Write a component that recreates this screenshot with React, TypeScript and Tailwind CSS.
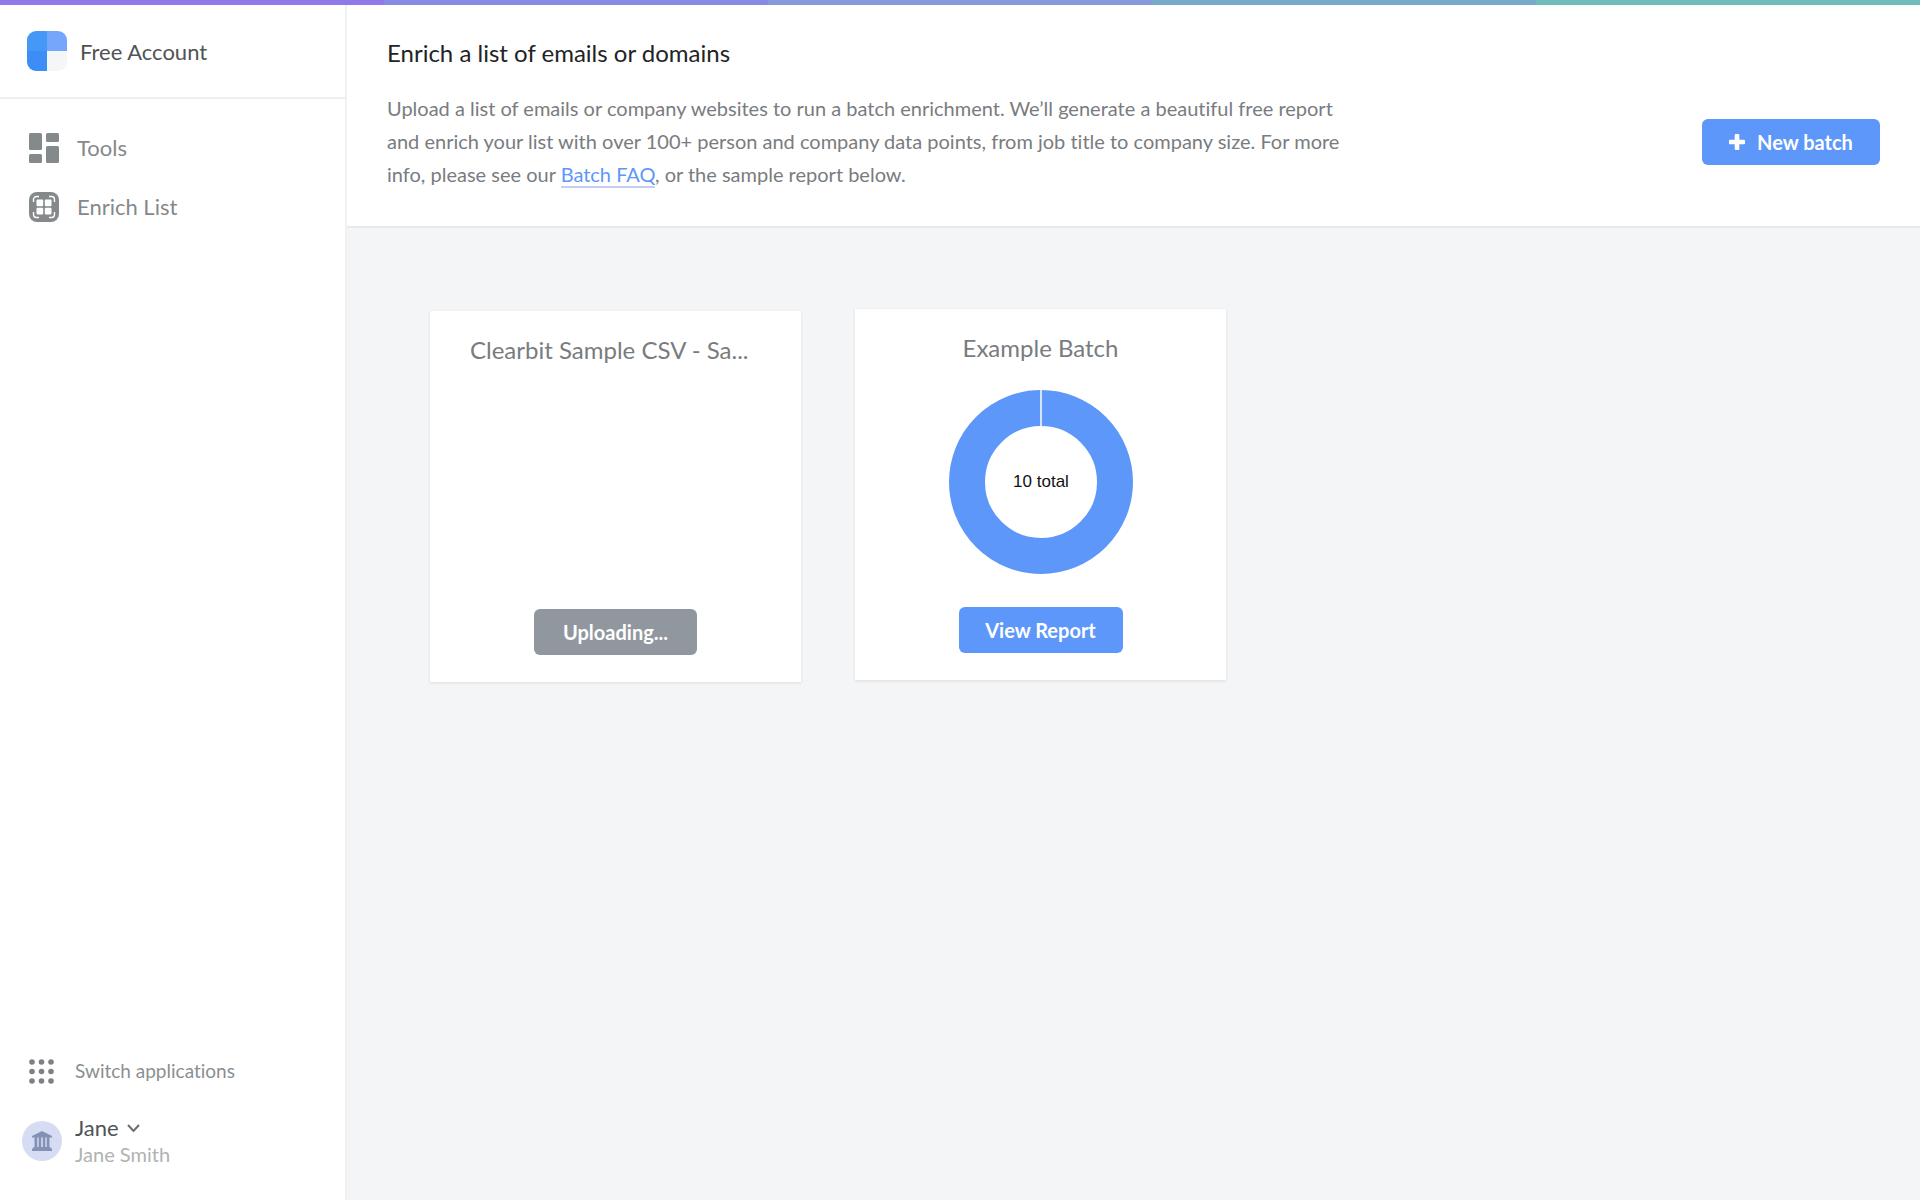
import React from "react";

const bands = ["bg-[#9079ea]", "bg-[#8789e6]", "bg-[#8799d8]", "bg-[#79a9cb]", "bg-[#6fbcbb]"];

function LogoMark() {
  return (
    <svg viewBox="0 0 40 40" className="size-10 shrink-0" aria-hidden="true">
      <defs>
        <clipPath id="logo-shape">
          <rect width="40" height="40" rx="9" />
        </clipPath>
      </defs>
      <g clipPath="url(#logo-shape)">
        <rect width="20" height="20" fill="#4499f7" />
        <rect y="20" width="20" height="20" fill="#3d8df6" />
        <rect x="20" width="20" height="20" fill="#74a6fb" />
        <rect x="20" y="20" width="20" height="20" fill="#f5f7f7" />
      </g>
    </svg>
  );
}

function ToolsIcon() {
  return (
    <svg viewBox="0 0 30 30" className="size-[30px] shrink-0" fill="#84898c" aria-hidden="true">
      <rect width="13" height="17" rx="1.5" />
      <rect x="17" width="13" height="9" rx="1.5" />
      <rect y="21" width="13" height="9" rx="1.5" />
      <rect x="17" y="13" width="13" height="17" rx="1.5" />
    </svg>
  );
}

function EnrichIcon() {
  return (
    <svg viewBox="0 0 30 30" className="size-[30px] shrink-0" aria-hidden="true">
      <rect width="30" height="30" rx="8" fill="#84898c" />
      <g fill="#fff">
        <rect x="7.5" y="7.5" width="6.700" height="6.700" rx="1" />
        <rect x="15.800" y="7.5" width="6.700" height="6.700" rx="1" />
        <rect x="7.5" y="15.800" width="6.700" height="6.700" rx="1" />
        <rect x="15.800" y="15.800" width="6.700" height="6.700" rx="1" />
      </g>
      <path
        d="M4.500 10V7.500a3 3 0 0 1 3-3H10M20 4.500h2.500a3 3 0 0 1 3 3V10M25.500 20v2.500a3 3 0 0 1-3 3H20M10 25.500H7.500a3 3 0 0 1-3-3V20"
        fill="none"
        stroke="#fff"
        strokeWidth="1.4"
      />
    </svg>
  );
}

function GridIcon() {
  const steps = [3, 12.5, 22];
  return (
    <svg viewBox="0 0 25 25" className="size-[25px] shrink-0" fill="#7d8185" aria-hidden="true">
      {steps.map((y) => steps.map((x) => <circle key={`${x}-${y}`} cx={x} cy={y} r="2.8" />))}
    </svg>
  );
}

function BankIcon() {
  return (
    <svg viewBox="0 0 20 20" className="size-5" fill="#8391b5" aria-hidden="true">
      <path d="M10 0 20 5v1.5H0V5z" />
      <path d="M2.500 6h2.800v11H2.500zM6.700 6h2.500v11H6.700zM10.800 6h2.500v11h-2.500zM14.700 6h2.800v11h-2.800z" />
      <path d="M1.500 16h17v1.500H20V20H0v-2.500h1.500z" />
    </svg>
  );
}

function Sidebar() {
  return (
    <aside className="flex w-[347px] shrink-0 flex-col border-r-2 border-[#f0f1f2] bg-white">
      <div className="flex h-[94px] items-center gap-[13px] border-b-2 border-[#efefef] pl-[27px] text-[22px] text-[#505356]">
        <LogoMark />
        <span>Free Account</span>
      </div>
      <nav className="flex flex-col pt-[19px] text-[22px] text-[#84898c]">
        <a href="#tools" className="flex h-[59px] items-center gap-[18px] pl-[29px]">
          <ToolsIcon />
          Tools
        </a>
        <a href="#enrich" className="flex h-[59px] items-center gap-[18px] pl-[29px]">
          <EnrichIcon />
          Enrich List
        </a>
      </nav>
      <div className="mt-auto flex flex-col gap-[30px] pb-[33px]">
        <button type="button" className="flex items-center gap-[21px] pl-[29px] text-[19px] leading-7 text-[#8b8f92]">
          <GridIcon />
          Switch applications
        </button>
        <button type="button" className="flex items-center gap-[13px] pl-[22px] text-left">
          <span className="flex size-10 items-center justify-center rounded-full bg-[#d6dcf4]">
            <BankIcon />
          </span>
          <span className="flex flex-col leading-[26px]">
            <span className="flex items-center gap-2 text-[22px] text-[#505356]">
              Jane
              <svg viewBox="0 0 13 8" className="h-2 w-[13px]" fill="none" stroke="#6b6f72" strokeWidth="2" aria-hidden="true">
                <path d="m1 1 5.5 6L12 1" />
              </svg>
            </span>
            <span className="text-[20px] text-[#b0b2b4]">Jane Smith</span>
          </span>
        </button>
      </div>
    </aside>
  );
}

const buttonBase = "flex h-[46px] items-center justify-center rounded-md text-[20px] font-bold text-white";

function BatchCard({ title, titleClass, className, children }: {
  title: string;
  titleClass: string;
  className: string;
  children: React.ReactNode;
}) {
  return (
    <article
      className={`flex size-[371px] flex-col items-center bg-white px-10 pt-[23px] pb-[27px] shadow-[0_1px_3px_rgba(0,0,0,0.1)] ${className}`}
    >
      <h2 className={`w-full text-[24px] leading-8 whitespace-nowrap text-[#797c7f] ${titleClass}`}>{title}</h2>
      {children}
    </article>
  );
}

export default function App() {
  return (
    <div className="flex min-h-screen flex-col bg-[#f4f5f7] font-['Lato',sans-serif] [font-variant-ligatures:none]">
      <div className="flex h-[5px]">
        {bands.map((band) => (
          <div key={band} className={`flex-1 ${band}`} />
        ))}
      </div>
      <div className="flex flex-1">
        <Sidebar />
        <main className="min-w-0 flex-1">
          <header className="border-b-2 border-[#e9ebeb] bg-white px-10 pt-8 pb-[35px]">
            <h1 className="text-[24px] leading-8 text-[#212325]">Enrich a list of emails or domains</h1>
            <div className="mt-[23px] flex items-center justify-between gap-10">
              <p className="max-w-[960px] text-[20px] leading-[33px] text-[#797c7f]">
                Upload a list of emails or company websites to run a batch enrichment. We’ll generate a beautiful free
                report and enrich your list with over 100+ person and company data points, from job title to company
                size. For more info, please see our{" "}
                <a href="#faq" className="border-b-2 border-[#c5cdf0] text-[#5d97f9]">Batch FAQ</a>, or the sample
                report below.
              </p>
              <button type="button" className={`${buttonBase} w-[178px] shrink-0 gap-3 bg-[#5d97f9]`}>
                <svg viewBox="0 0 16 16" className="size-4" fill="#fff" aria-hidden="true">
                  <path d="M5.700 1a1 1 0 0 1 1-1h2.600a1 1 0 0 1 1 1v4.700H15a1 1 0 0 1 1 1v2.600a1 1 0 0 1-1 1h-4.700V15a1 1 0 0 1-1 1H6.700a1 1 0 0 1-1-1v-4.700H1a1 1 0 0 1-1-1V6.700a1 1 0 0 1 1-1h4.700z" />
                </svg>
                New batch
              </button>
            </div>
          </header>
          <section className="flex flex-wrap gap-[54px] px-[83px] py-[81px]">
            <BatchCard title="Clearbit Sample CSV - Sa..." titleClass="text-left" className="mt-[2px]">
              <button type="button" disabled className={`${buttonBase} mt-auto w-[163px] bg-[#91979f]`}>
                Uploading...
              </button>
            </BatchCard>
            <BatchCard title="Example Batch" titleClass="text-center" className="">
              <svg viewBox="0 0 184 184" className="mt-[26px] size-[184px]" role="img" aria-label="10 total">
                <circle cx="92" cy="92" r="74" fill="none" stroke="#5d97f9" strokeWidth="36" />
                <path d="M92 0v37" stroke="#fff" strokeWidth="1.5" />
                <text x="92" y="97" textAnchor="middle" fill="#111" className="font-['Liberation_Sans',sans-serif] text-[17px]">
                  10 total
                </text>
              </svg>
              <button type="button" className={`${buttonBase} mt-auto w-[164px] bg-[#5d97f9]`}>View Report</button>
            </BatchCard>
          </section>
        </main>
      </div>
    </div>
  );
}
